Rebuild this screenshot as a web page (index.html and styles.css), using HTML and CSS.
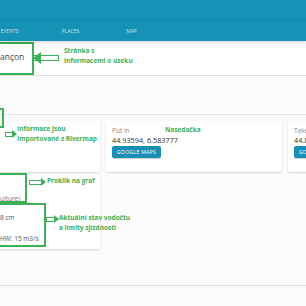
FILE: index.html
```html
<!DOCTYPE html>
<html lang="en">
<head>
    <meta charset="UTF-8">
    <title>Section detail</title>
    <link rel="stylesheet" href="styles.css">
</head>
<body>
    <header class="topbar">
        <div class="brand-row"></div>
        <nav class="tabs">
            <span class="tab">Events</span>
            <span class="tab">Places</span>
            <span class="tab">Map</span>
        </nav>
    </header>

    <section class="title-bar">
        <h1 class="title">ançon</h1>
        <!-- annotation -->
        <div class="note-box box-title"></div>
        <div class="note arrow-left note-title">Stránka s<br>informacemi o úseku</div>
    </section>

    <main class="content">
        <div class="spacer"></div>
        <div class="cards">
            <div class="column-left">
                <div class="card card-info"></div>
                <div class="card card-gauge">
                    <p class="link">ulture)</p>
                    <p class="gauge-row">8 cm</p>
                    <p class="gauge-row">HW: 15 m3/s</p>
                </div>
            </div>
            <div class="card card-spot">
                <div class="label">Put in</div>
                <div class="coords">44.93594, 6.583777</div>
                <button class="btn">Google Maps</button>
            </div>
            <div class="card card-spot">
                <div class="label">Take out</div>
                <div class="coords">44.89012, 6.63441</div>
                <button class="btn">Google Maps</button>
            </div>
        </div>
        <div class="footer-line"></div>

        <!-- annotations -->
        <div class="note-box box-info"></div>
        <div class="note note-info">Informace jsou<br>Importované z Rivermap</div>
        <div class="note note-putin">Nasedačka</div>
        <div class="note-box box-link"></div>
        <div class="note note-link">Proklik na graf</div>
        <div class="note-box box-gauge"></div>
        <div class="note note-gauge">Aktuální stav vodočtu<br>a limity sjízdnosti</div>
    </main>
</body>
</html>
```

FILE: styles.css
```css
body {
    margin: 0;
    font-family: "Open Sans", sans-serif;
    background-color: #fbfbfb;
    overflow: hidden;
    height: 306px;
}

.topbar {
    background-color: #1592b5;
    box-shadow: 0 1px 3px rgba(0,0,0,0.2);
    position: relative;
    z-index: 2;
}

.brand-row {
    height: 20px;
    border-bottom: 1px solid #1189ab;
}

.tabs {
    display: flex;
    height: 20px;
    align-items: center;
    margin-left: -21px;
}

.tab {
    width: 61px;
    text-align: center;
    text-transform: uppercase;
    font-size: 5px;
    color: rgba(255,255,255,0.75);
}

.title-bar {
    position: relative;
    background: #fff;
    height: 34px;
    border-bottom: 1px solid #dcdcdc;
}

.title {
    margin: 0;
    padding-top: 10px;
    font-size: 8.5px;
    font-weight: normal;
    color: #444;
    line-height: 12px;
}

.note {
    position: absolute;
    font-family: "Open Sans", sans-serif;
    font-weight: bold;
    font-size: 6.5px;
    line-height: 10px;
    color: #3cb054;
    white-space: nowrap;
}

.note-box {
    position: absolute;
    border: 2px solid #3cb054;
}

.box-title {
    left: -4px;
    top: 1px;
    width: 34px;
    height: 29px;
}

.note-title {
    left: 64px;
    top: 5px;
}

.note-title::before {
    content: "";
    position: absolute;
    left: -30px;
    top: 9px;
    width: 24px;
    height: 4px;
    border: 1px solid #3cb054;
    border-left: none;
}

.note-title::after {
    content: "";
    position: absolute;
    left: -31px;
    top: 6px;
    width: 0;
    height: 0;
    border-top: 6px solid transparent;
    border-bottom: 6px solid transparent;
    border-right: 8px solid #3cb054;
}

.content {
    position: relative;
    height: 252px;
}

.spacer {
    height: 38px;
    border-bottom: 1px solid #e4e4e4;
}

.cards {
    display: flex;
    gap: 6px;
    padding-top: 6px;
    margin-left: -6px;
}

.column-left {
    display: flex;
    flex-direction: column;
    gap: 2px;
    width: 106px;
    flex-shrink: 0;
}

.card {
    background: #fff;
    box-shadow: 0 1px 2px rgba(0,0,0,0.15);
    border-radius: 2px;
}

.card-info {
    height: 51px;
}

.card-gauge {
    height: 75px;
    font-size: 6.5px;
    color: #555;
    padding-left: 6px;
}

.card-gauge p {
    margin: 0;
    line-height: 9px;
}

.link {
    padding-top: 20px;
    color: #5a7aa5;
}

.gauge-row {
    padding-top: 10px;
}

.gauge-row + .gauge-row {
    padding-top: 12px;
}

.card-spot {
    width: 170px;
    height: 51px;
    padding-left: 6px;
    flex-shrink: 0;
    overflow: hidden;
}

.label {
    padding-top: 6px;
    font-size: 6.5px;
    color: #888;
    line-height: 8px;
}

.coords {
    font-size: 7.3px;
    color: #333;
    line-height: 10px;
}

.btn {
    display: block;
    margin-top: 1px;
    border: none;
    border-radius: 2px;
    background-color: #1a8fb5;
    color: #fff;
    font-family: "Open Sans", sans-serif;
    font-size: 5.3px;
    letter-spacing: 0.2px;
    text-transform: uppercase;
    white-space: nowrap;
    text-align: center;
    padding: 0;
    width: 49px;
    height: 12px;
    line-height: 12px;
    box-shadow: 0 1px 1px rgba(0,0,0,0.2);
}

.footer-line {
    margin-top: 36px;
    border-bottom: 1px solid #e0e0e0;
}

.box-info {
    left: -6px;
    top: 32px;
    width: 6px;
    height: 16px;
}

.note-info {
    left: 17px;
    top: 48px;
}

.note-putin {
    left: 165px;
    top: 49px;
}

.box-link {
    left: -4px;
    top: 97px;
    width: 27px;
    height: 26px;
}

.note-link {
    left: 47px;
    top: 100px;
}

.box-gauge {
    left: -4px;
    top: 127px;
    width: 46px;
    height: 40px;
}

.note-gauge {
    left: 59px;
    top: 137px;
}

.note-info::before,
.note-link::before,
.note-gauge::before {
    content: "";
    position: absolute;
    top: 4px;
    width: 8px;
    height: 3px;
    border: 1px solid #3cb054;
    border-right: none;
}

.note-info::after,
.note-link::after,
.note-gauge::after {
    content: "";
    position: absolute;
    top: 2px;
    width: 0;
    height: 0;
    border-top: 4px solid transparent;
    border-bottom: 4px solid transparent;
    border-left: 5px solid #3cb054;
}

.note-info::before { left: -12px; top: 8px; }
.note-info::after { left: -5px; top: 6px; }
.note-link::before { left: -18px; width: 12px; }
.note-link::after { left: -6px; }
.note-gauge::before { left: -13px; }
.note-gauge::after { left: -5px; }
```
